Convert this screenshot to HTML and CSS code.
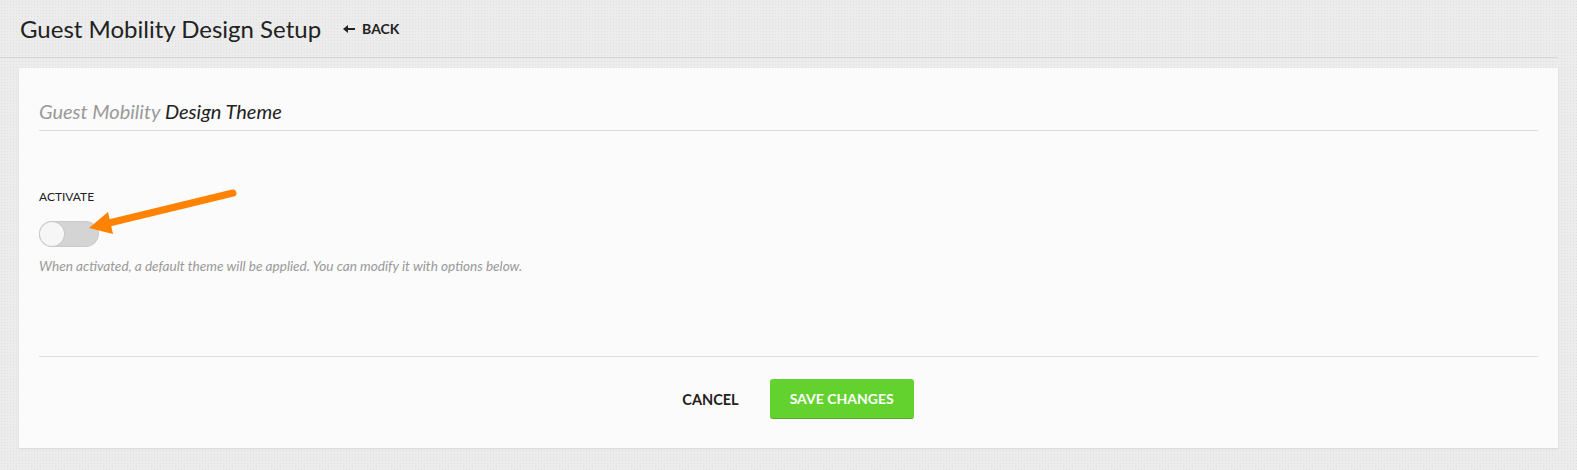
FILE: index.html
```html
<!DOCTYPE html>
<html lang="en">

<head>
    <meta charset="UTF-8">
    <title>Guest Mobility Design Setup</title>
    <link rel="stylesheet" href="styles.css">
</head>

<body>
    <!-- top bar -->
    <header class="page-head">
        <h1>Guest Mobility Design Setup</h1>
        <a class="back-link" href="#">
            <svg width="12" height="10" viewBox="0 0 12 10"><path d="M0 5 L5 1 L5 4 L12 4 L12 6 L5 6 L5 9 Z" fill="#222"/></svg>
            BACK
        </a>
    </header>

    <!-- settings card -->
    <main class="card">
        <h2 class="card-title"><span class="muted">Guest Mobility</span> Design Theme</h2>

        <div class="field">
            <label class="field-label">ACTIVATE</label>
            <div class="toggle"><span class="knob"></span></div>
            <p class="hint">When activated, a default theme will be applied. You can modify it with options below.</p>
        </div>

        <div class="actions">
            <button class="btn-cancel">CANCEL</button>
            <button class="btn-save">SAVE CHANGES</button>
        </div>

        <!-- orange annotation arrow -->
        <svg class="pointer" width="170" height="70" viewBox="0 0 170 70">
            <line x1="154" y1="15" x2="30" y2="45" stroke="#ff8200" stroke-width="7" stroke-linecap="round"/>
            <polygon points="10,50 29,34 34,56" fill="#ff8200"/>
        </svg>
    </main>
</body>

</html>
```

FILE: styles.css
```css
/* page */
body {
    margin: 0;
    font-family: 'Lato', 'Open Sans', sans-serif;
    color: #222;
    background-color: #ececec;
    background-image: radial-gradient(#e0e0e0 0.8px, transparent 0.9px);
    background-size: 3px 3px;
    height: 470px;
}

/* top bar */
.page-head {
    display: flex;
    align-items: center;
    height: 57px;
    margin-right: 19px;
    padding-left: 20px;
    border-bottom: 1px solid #d6d6d6;
}

.page-head h1 {
    margin: 0;
    font-size: 24px;
    font-weight: 400;
    color: #222;
}

.back-link {
    display: flex;
    align-items: center;
    gap: 7px;
    margin-left: 22px;
    font-size: 14px;
    font-weight: 700;
    color: #222;
    text-decoration: none;
}

/* card */
.card {
    position: relative;
    margin: 10px 19px 0 19px;
    height: 380px;
    padding: 0 20px;
    box-sizing: border-box;
    background: #fbfbfb;
    box-shadow: 0 1px 2px rgba(0, 0, 0, 0.08);
    display: flex;
    flex-direction: column;
}

.card-title {
    margin: 31px 0 0 0;
    padding-bottom: 7px;
    font-size: 20px;
    font-weight: 400;
    font-style: italic;
    color: #222;
    border-bottom: 1px solid #dedede;
}

.muted {
    color: #999;
}

.field {
    margin-top: 58px;
    height: 167px;
    border-bottom: 1px solid #dedede;
}

.field-label {
    display: block;
    font-size: 12px;
    color: #222;
}

.toggle {
    margin-top: 17px;
    width: 60px;
    height: 26px;
    box-sizing: border-box;
    border: 1px solid #c9c9c9;
    border-radius: 13px;
    background: #d4d4d4;
    position: relative;
}

.knob {
    position: absolute;
    left: 0;
    top: 0;
    width: 24px;
    height: 24px;
    border-radius: 50%;
    background: #f6f6f6;
    box-shadow: 0 0 0 1px #c9c9c9;
}

.hint {
    margin: 11px 0 0 0;
    font-size: 13.6px;
    font-style: italic;
    color: #999;
}

.pointer {
    position: absolute;
    left: 60px;
    top: 110px;
}

/* buttons */
.actions {
    display: flex;
    justify-content: center;
    align-items: center;
    gap: 31px;
    margin-top: 22px;
    padding-left: 19px;
}

.btn-cancel {
    border: none;
    background: none;
    font-family: inherit;
    font-size: 14.5px;
    font-weight: 700;
    color: #222;
    padding: 0;
}

.btn-save {
    width: 144px;
    height: 40px;
    border: none;
    border-radius: 3px;
    border-bottom: 1px solid #4fb31c;
    background: #63d22e;
    color: #fff;
    font-family: inherit;
    font-size: 14px;
    font-weight: 700;
}
```
